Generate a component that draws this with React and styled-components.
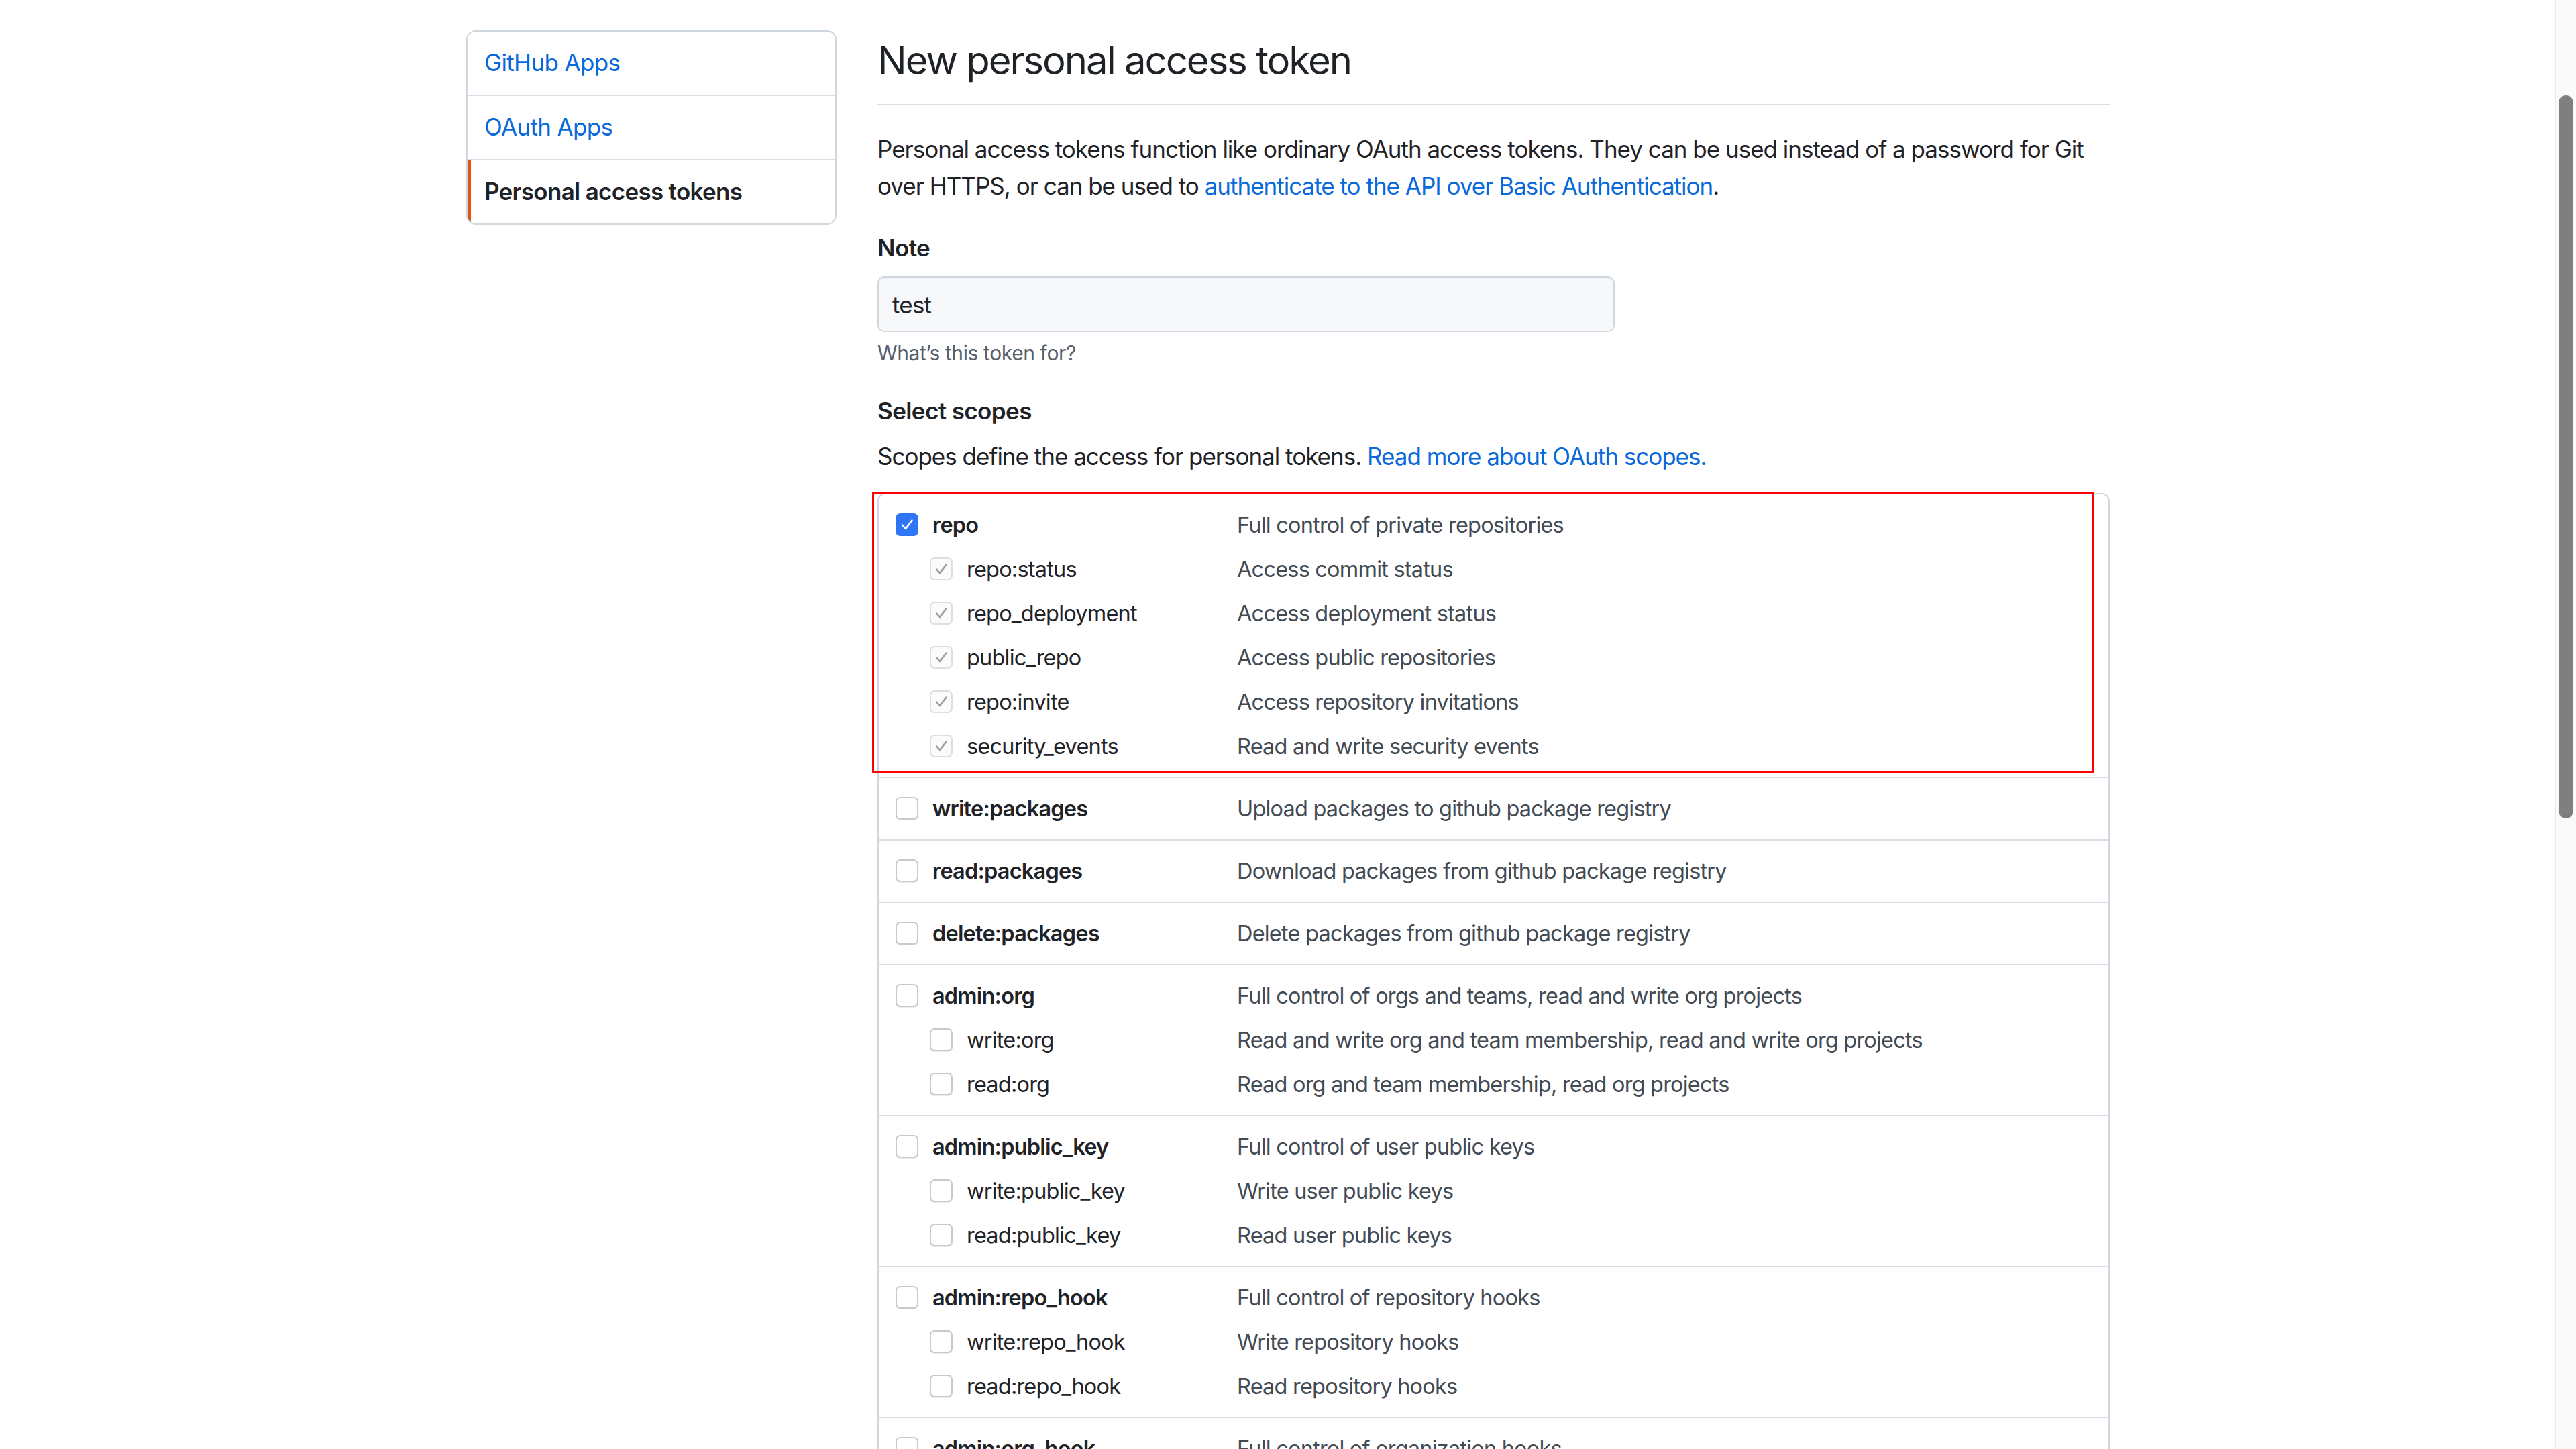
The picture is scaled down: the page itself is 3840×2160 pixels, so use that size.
import React from "react";
import styled, { createGlobalStyle, css } from "styled-components";

const GlobalStyle = createGlobalStyle`
  html, body {
    margin: 0;
    padding: 0;
    height: 2160px;
    overflow: hidden;
    background: #ffffff;
  }
  body {
    font-family: Inter, "Noto Sans", "Liberation Sans", sans-serif;
    color: #1f2328;
    font-size: 35px;
    letter-spacing: -0.8px;
  }
  * { box-sizing: border-box; }
`;

const Container = styled.div`
  width: 2450px;
  margin: 0 auto;
  padding-top: 45px;
  display: flex;
  gap: 61px;
  align-items: flex-start;
`;

const SideMenu = styled.nav`
  flex: none;
  width: 552px;
  border: 2px solid #d0d7de;
  border-radius: 14px;
  overflow: hidden;
  display: flex;
  flex-direction: column;
`;

const MenuItem = styled.a`
  display: block;
  height: 96px;
  line-height: 92px;
  padding-left: 25px;
  font-size: 35px;
  letter-spacing: ${(p) => (p.$selected ? "-0.7px" : "-0.65px")};
  text-decoration: none;
  color: ${(p) => (p.$selected ? "#1f2328" : "#0969da")};
  font-weight: ${(p) => (p.$selected ? 600 : 400)};
  border-bottom: 2px solid #d8dee4;
  &:last-child {
    border-bottom: none;
    height: 94px;
  }
  ${(p) =>
    p.$selected &&
    css`
      box-shadow: inset 5px 0 0 #dc5514;
    `}
`;

const Main = styled.main`
  flex: 1;
  min-width: 0;
`;

const Subhead = styled.h2`
  margin: 0;
  font-size: 58px;
  line-height: 90px;
  font-weight: 400;
  letter-spacing: -2px;
  padding-bottom: 20px;
  border-bottom: 2px solid #d8dee4;
`;

const Lead = styled.p`
  margin: 38px 0 0;
  font-size: 35px;
  line-height: 55px;
  letter-spacing: -1px;
`;

const Link = styled.a`
  color: #0969da;
  text-decoration: none;
`;

const Label = styled.div`
  margin-top: 38px;
  font-size: 35px;
  line-height: 52px;
  font-weight: 600;
  letter-spacing: -0.6px;
`;

const TextInput = styled.div`
  margin-top: 17px;
  width: 1099px;
  height: 83px;
  border: 2px solid #d0d7de;
  border-radius: 10px;
  background: #f6f8fa;
  box-shadow: inset 0 2px 0 rgba(208, 215, 222, 0.2);
  padding-left: 20px;
  display: flex;
  align-items: center;
  font-size: 35px;
  color: #1f2328;
`;

const Hint = styled.div`
  margin-top: 9px;
  font-size: 30px;
  line-height: 45px;
  letter-spacing: -0.4px;
  color: #57606a;
`;

const SectionLabel = styled(Label)`
  margin-top: 37px;
`;

const SectionText = styled.div`
  margin-top: 16px;
  font-size: 35px;
  line-height: 52px;
  letter-spacing: -1px;
`;

const ScopeList = styled.div`
  position: relative;
  margin-top: 29px;
  border: 2px solid #d0d7de;
  border-bottom: none;
  border-radius: 12px 12px 0 0;
`;

const Group = styled.div`
  padding: 12px 0 13px;
  & + & {
    border-top: 2px solid #d8dee4;
  }
`;

const Row = styled.div`
  height: 66px;
  display: flex;
  align-items: center;
  padding-left: 25px;
  font-size: 32.5px;
  letter-spacing: -0.8px;
`;

const NameCell = styled.div`
  flex: none;
  width: 509px;
  display: flex;
  align-items: center;
  gap: 21px;
  padding-left: ${(p) => (p.$sub ? "51px" : "0")};
`;

const ScopeName = styled.span`
  font-weight: ${(p) => (p.$sub ? 400 : 600)};
  color: #1f2328;
  white-space: nowrap;
`;

const ScopeDesc = styled.span`
  color: #424a53;
  white-space: nowrap;
`;

const Box = styled.span`
  flex: none;
  width: 34px;
  height: 34px;
  border-radius: 7px;
  display: inline-flex;
  align-items: center;
  justify-content: center;
  ${(p) =>
    p.$state === "checked"
      ? css`
          background: #2f76f6;
          border: none;
        `
      : p.$state === "inherited"
      ? css`
          background: #fbfbfb;
          border: 2px solid #dedede;
        `
      : css`
          background: #ffffff;
          border: 2px solid #c9c9c9;
          box-shadow: 0 1px 0 rgba(0, 0, 0, 0.08);
        `}
  svg {
    width: 24px;
    height: 24px;
  }
`;

const Annotation = styled.div`
  position: absolute;
  top: -4px;
  left: -10px;
  width: 1822px;
  height: 420px;
  border: 3px solid #ff0000;
  pointer-events: none;
`;

const ScrollTrack = styled.div`
  position: fixed;
  top: 0;
  right: 0;
  width: 32px;
  height: 2160px;
  background: #fafafa;
  border-left: 2px solid #e8e8e8;
`;

const ScrollThumb = styled.div`
  margin: 142px 0 0 4px;
  width: 22px;
  height: 1078px;
  border-radius: 11px;
  background: #7f7f7f;
`;

const Check = ({ color }) => (
  <svg viewBox="0 0 24 24" fill="none">
    <polyline
      points="5,12.5 10,18 19.5,5.5"
      stroke={color}
      strokeWidth="2.6"
      strokeLinecap="round"
      strokeLinejoin="round"
    />
  </svg>
);

const Checkbox = ({ state }) => (
  <Box $state={state}>
    {state === "checked" && <Check color="#ffffff" />}
    {state === "inherited" && <Check color="#9b9b9b" />}
  </Box>
);

const scopes = [
  {
    name: "repo",
    desc: "Full control of private repositories",
    state: "checked",
    children: [
      ["repo:status", "Access commit status"],
      ["repo_deployment", "Access deployment status"],
      ["public_repo", "Access public repositories"],
      ["repo:invite", "Access repository invitations"],
      ["security_events", "Read and write security events"],
    ],
  },
  { name: "write:packages", desc: "Upload packages to github package registry", children: [] },
  { name: "read:packages", desc: "Download packages from github package registry", children: [] },
  { name: "delete:packages", desc: "Delete packages from github package registry", children: [] },
  {
    name: "admin:org",
    desc: "Full control of orgs and teams, read and write org projects",
    children: [
      ["write:org", "Read and write org and team membership, read and write org projects"],
      ["read:org", "Read org and team membership, read org projects"],
    ],
  },
  {
    name: "admin:public_key",
    desc: "Full control of user public keys",
    children: [
      ["write:public_key", "Write user public keys"],
      ["read:public_key", "Read user public keys"],
    ],
  },
  {
    name: "admin:repo_hook",
    desc: "Full control of repository hooks",
    children: [
      ["write:repo_hook", "Write repository hooks"],
      ["read:repo_hook", "Read repository hooks"],
    ],
  },
  { name: "admin:org_hook", desc: "Full control of organization hooks", children: [] },
  { name: "gist", desc: "Create gists", children: [] },
];

export default function App() {
  return (
    <>
      <GlobalStyle />
      <Container>
        <SideMenu>
          <MenuItem href="#">GitHub Apps</MenuItem>
          <MenuItem href="#">OAuth Apps</MenuItem>
          <MenuItem href="#" $selected>
            Personal access tokens
          </MenuItem>
        </SideMenu>
        <Main>
          <Subhead>New personal access token</Subhead>
          <Lead>
            Personal access tokens function like ordinary OAuth access tokens. They can be used
            instead of a password for Git over HTTPS, or can be used to{" "}
            <Link href="#">authenticate to the API over Basic Authentication</Link>.
          </Lead>
          <Label>Note</Label>
          <TextInput>test</TextInput>
          <Hint>What’s this token for?</Hint>
          <SectionLabel>Select scopes</SectionLabel>
          <SectionText>
            Scopes define the access for personal tokens.{" "}
            <Link href="#">Read more about OAuth scopes.</Link>
          </SectionText>
          <ScopeList>
            {scopes.map((g) => (
              <Group key={g.name}>
                <Row>
                  <NameCell>
                    <Checkbox state={g.state} />
                    <ScopeName>{g.name}</ScopeName>
                  </NameCell>
                  <ScopeDesc>{g.desc}</ScopeDesc>
                </Row>
                {g.children.map(([n, d]) => (
                  <Row key={n}>
                    <NameCell $sub>
                      <Checkbox state={g.state === "checked" ? "inherited" : undefined} />
                      <ScopeName $sub>{n}</ScopeName>
                    </NameCell>
                    <ScopeDesc>{d}</ScopeDesc>
                  </Row>
                ))}
              </Group>
            ))}
            <Annotation />
          </ScopeList>
        </Main>
      </Container>
      <ScrollTrack>
        <ScrollThumb />
      </ScrollTrack>
    </>
  );
}
